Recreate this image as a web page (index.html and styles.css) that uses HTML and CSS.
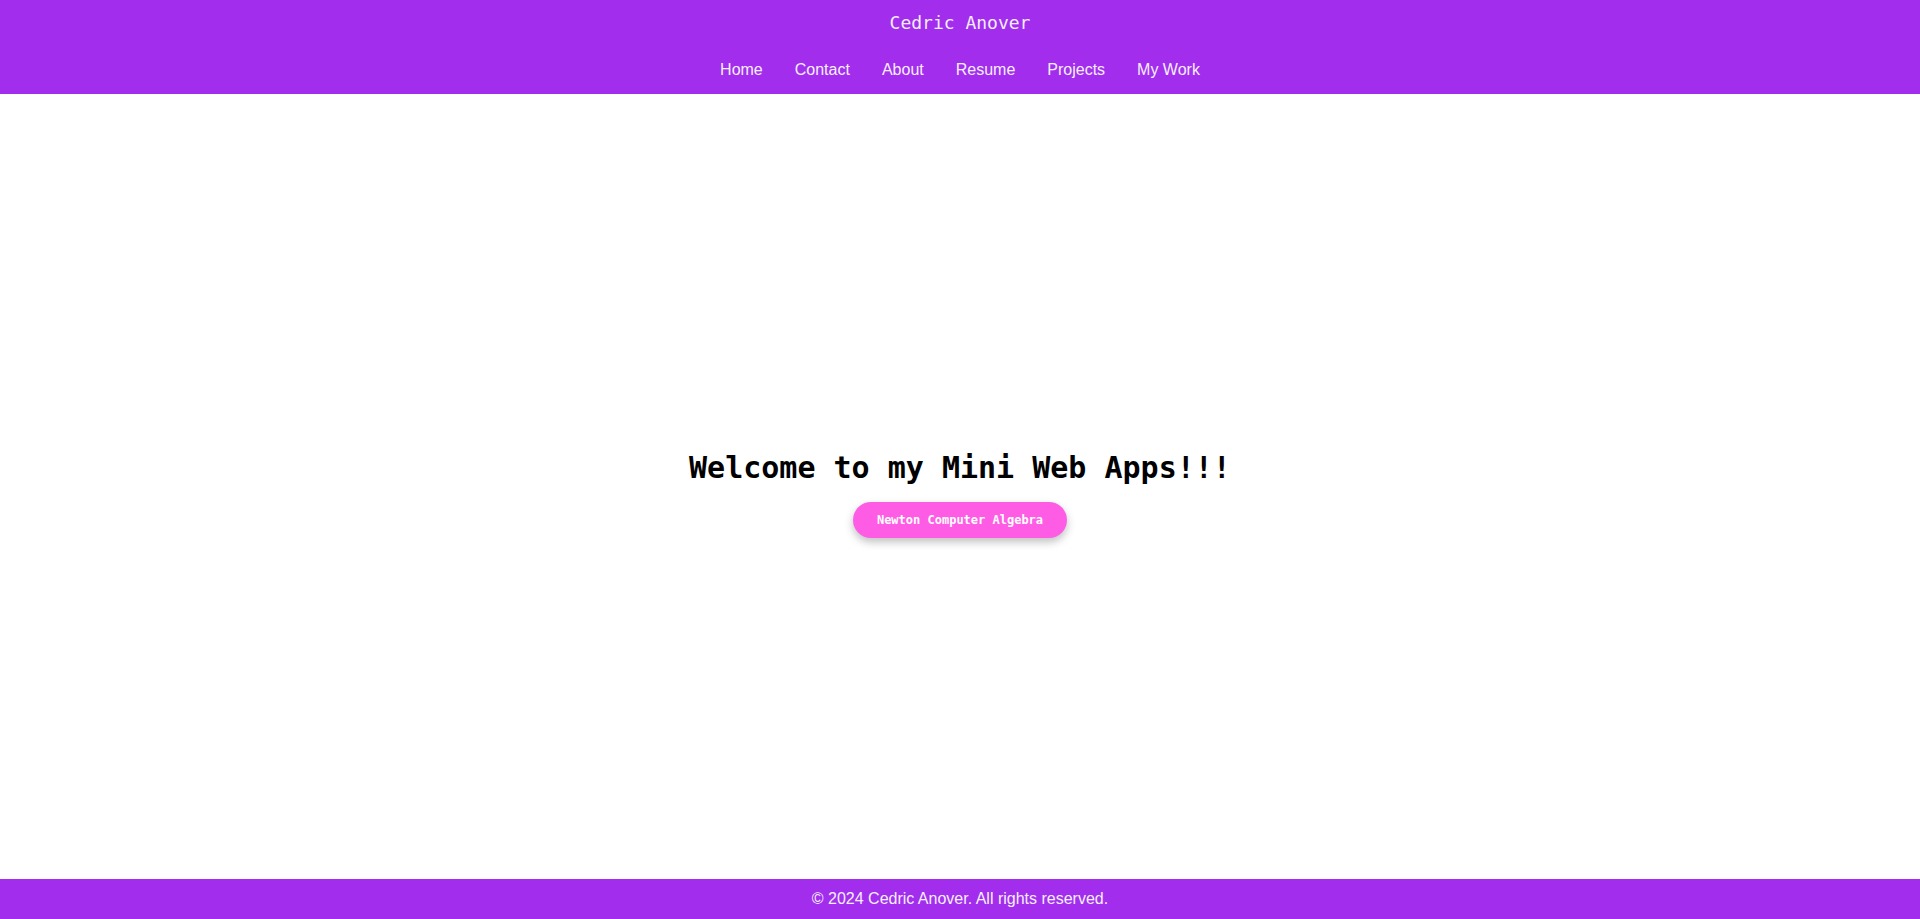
FILE: index.html
```html
<!DOCTYPE html>
<html lang="en">
<head>
<meta charset="utf-8">
<title>Cedric Anover - Mini Web Apps</title>
<link rel="stylesheet" href="styles.css">
</head>
<body>
<header class="site-header">
  <div class="brand">Cedric Anover</div>
  <nav class="nav">
    <a href="#">Home</a>
    <a href="#">Contact</a>
    <a href="#">About</a>
    <a href="#">Resume</a>
    <a href="#">Projects</a>
    <a href="#">My Work</a>
  </nav>
</header>
<main class="main">
  <h1 class="title">Welcome to my Mini Web Apps!!!</h1>
  <a class="app-btn" href="#">Newton Computer Algebra</a>
</main>
<footer class="site-footer">© 2024 Cedric Anover. All rights reserved.</footer>
</body>
</html>
```
FILE: styles.css
```css
html, body {
  margin: 0;
  padding: 0;
}
body {
  min-height: 100vh;
  display: flex;
  flex-direction: column;
  background: #ffffff;
  font-family: "Liberation Sans", Arial, sans-serif;
}
.site-header {
  background: #a22dec;
  color: #ffffff;
  display: flex;
  flex-direction: column;
  align-items: center;
  padding: 12px 0 0;
  height: 94px;
  box-sizing: border-box;
}
.brand {
  font-family: "DejaVu Sans Mono", monospace;
  font-size: 18px;
  line-height: 21px;
  color: #f3eefc;
}
.nav {
  display: flex;
  gap: 32px;
  margin-top: 28px;
}
.nav a {
  color: #f5effd;
  text-decoration: none;
  font-size: 16px;
  line-height: 18px;
}
.main {
  flex: 1;
  display: flex;
  flex-direction: column;
  align-items: center;
  justify-content: center;
  padding-top: 15px;
}
.title {
  margin: 0;
  font-family: "DejaVu Sans Mono", monospace;
  font-weight: bold;
  font-size: 30px;
  line-height: 36px;
  color: #000000;
}
.app-btn {
  margin-top: 16px;
  display: inline-flex;
  align-items: center;
  justify-content: center;
  height: 36px;
  padding: 0 24px;
  border-radius: 18px;
  background: #ff5ce6;
  color: #ffffff;
  text-decoration: none;
  font-family: "DejaVu Sans Mono", monospace;
  font-weight: bold;
  font-size: 12px;
  box-shadow: 0 4px 8px rgba(0, 0, 0, 0.25);
}
.site-footer {
  background: #a22dec;
  color: #f5effd;
  text-align: center;
  height: 40px;
  line-height: 40px;
  font-size: 16px;
}
```
